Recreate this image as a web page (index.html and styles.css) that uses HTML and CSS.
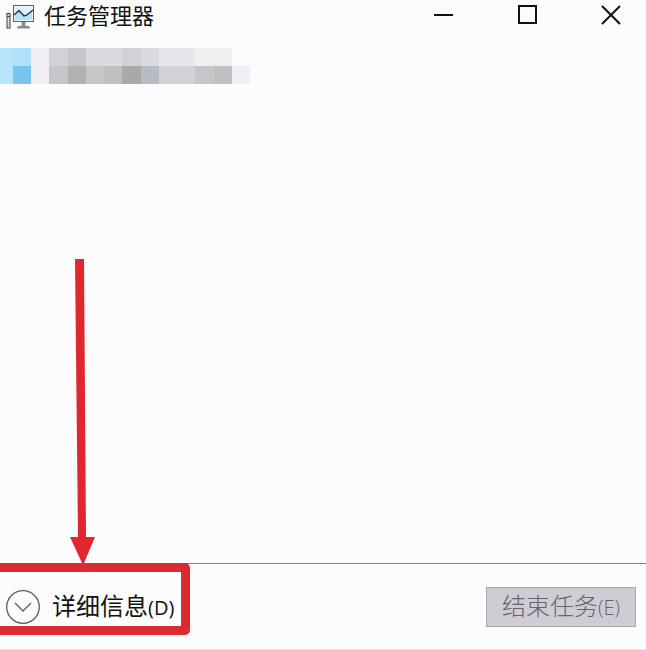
FILE: index.html
```html
<!DOCTYPE html>
<html lang="zh-CN">
<head>
  <meta charset="UTF-8">
  <title>任务管理器</title>
  <meta name="viewport" content="width=device-width, initial-scale=1.0">
  <link rel="stylesheet" href="styles.css">
</head>
<body>

  <div class="window">

    <!-- Title bar -->
    <header class="title-bar">
      <svg class="app-icon" width="30" height="30" viewBox="0 0 30 30" aria-hidden="true">
        <rect x="1" y="12.500" width="3" height="14.500" fill="#d9dde0" stroke="#3c4247"/>
        <path d="M1 15.500h3" stroke="#3c4247"/>
        <rect x="7.500" y="4.500" width="20" height="16" fill="#f4f8fa" stroke="#566067"/>
        <path d="M9 6h17v13H9z" fill="#b5e2f3"/>
        <path d="M9 14l4-4 5 5 3-1 5-5V6H9z" fill="#dcf2fb"/>
        <path d="M8 14l5-4.500L18 15l3-1 6-5" fill="none" stroke="#24323b" stroke-width="1.400"/>
        <path d="M15.500 21h4v4h-4z" fill="#8b9195"/>
        <path d="M12.500 25.500h10l1 1.500h-12z" fill="#c5c9cc" stroke="#565c61" stroke-width=".8"/>
      </svg>
      <h1>任务管理器</h1>
      <div class="window-buttons">
        <button type="button" aria-label="最小化">
          <svg width="22" height="22" viewBox="0 0 22 22"><path d="M2 11h19"/></svg>
        </button>
        <button type="button" aria-label="最大化">
          <svg width="22" height="22" viewBox="0 0 22 22"><path d="M3 2h17v17H3z"/></svg>
        </button>
        <button type="button" aria-label="关闭">
          <svg width="22" height="22" viewBox="0 0 22 22"><path d="M2 2l18 18M20 2L2 20"/></svg>
        </button>
      </div>
    </header>

    <!-- Running apps, name is masked -->
    <main class="app-list">
      <div class="mosaic">
        <i class="sky-1"></i><i class="sky-2"></i><i class="g1"></i><i class="g4"></i><i class="g5"></i><i class="g3"></i><i class="g3"></i><i class="g4"></i><i class="g3"></i><i class="g2"></i><i class="g2"></i><i class="g1"></i><i class="g1"></i><i></i>
        <i class="sky-1"></i><i class="sky-3"></i><i class="g1"></i><i class="g5"></i><i class="g7"></i><i class="g5"></i><i class="g6"></i><i class="g8"></i><i class="g6b"></i><i class="g4"></i><i class="g4"></i><i class="g5"></i><i class="g6"></i><i class="g0"></i>
      </div>
      <svg class="arrow" width="30" height="306" viewBox="0 0 30 306" aria-hidden="true">
        <path d="M6 0h9l2 278h9l-11 26h-2L1 278h8z"/>
      </svg>
    </main>

    <!-- Bottom bar -->
    <footer class="bottom-bar">
      <button type="button" class="details-btn">
        <svg width="34" height="34" viewBox="0 0 34 34" aria-hidden="true">
          <circle cx="17" cy="17" r="16.300"/>
          <path d="M9 13l8 8 8-8"/>
        </svg>
        <span>详细信息<small>(D)</small></span>
      </button>
      <button type="button" class="end-btn" disabled>结束任务<small>(E)</small></button>
      <div class="highlight"></div>
    </footer>

  </div>

</body>
</html>
```

FILE: styles.css
```css
* {
  box-sizing: border-box;
}

body {
  margin: 0;
  font-family: "Open Sans", "Noto Sans CJK SC", sans-serif;
  background: #fcfcfd;
  color: #111;
}

button {
  padding: 0;
  border: none;
  background: none;
  color: inherit;
  font-family: inherit;
}

.window {
  display: flex;
  flex-direction: column;
  min-height: 100vh;
  overflow: hidden;
  border-bottom: 1px solid #dfe5e8;
}

/* Title bar */
.title-bar {
  display: flex;
  align-items: center;
  height: 32px;
  padding-left: 6px;
}

.title-bar h1 {
  margin: 0 0 0 8px;
  font-size: 22px;
  font-weight: 400;
  line-height: 30px;
  align-self: flex-start;
}

.window-buttons {
  display: flex;
  gap: 2px;
  height: 32px;
  margin-left: auto;
  margin-right: -6px;
}

.window-buttons button {
  display: flex;
  align-items: center;
  justify-content: center;
  width: 82px;
  height: 30px;
}

.window-buttons svg {
  fill: none;
  stroke: #111;
  stroke-width: 2;
}

/* App list */
.app-list {
  position: relative;
  flex: 1;
  padding-top: 16px;
}

.mosaic {
  display: grid;
  grid-template-columns: 13px repeat(13, 1fr);
  grid-auto-rows: 18px;
  width: 250px;
}

.sky-1 { background: #b9e5fa; }
.sky-2 { background: #aee1fb; }
.sky-3 { background: #77c5ec; }
.g0 { background: #f0eff7; }
.g1 { background: #efeef1; }
.g2 { background: #e6e6ea; }
.g3 { background: #dcdade; }
.g4 { background: #d2d2d6; }
.g5 { background: #c6c6ca; }
.g6 { background: #bfbec0; }
.g6b { background: #b6bcc3; }
.g7 { background: #b1b1b4; }
.g8 { background: #a9a9a9; }

.arrow {
  position: absolute;
  left: 69px;
  bottom: -2px;
  z-index: 2;
  fill: #e0262e;
}

/* Bottom bar */
.bottom-bar {
  position: relative;
  display: flex;
  align-items: center;
  justify-content: space-between;
  height: 86px;
  padding: 0 10px 0 6px;
  border-top: 1px solid #8a7f84;
}

.bottom-bar button {
  font-size: 24px;
  line-height: 36px;
}

.bottom-bar small {
  font-size: 20px;
}

.details-btn {
  display: flex;
  align-items: center;
  gap: 12px;
}

.details-btn svg {
  fill: none;
  stroke: #5c5c60;
  stroke-width: 1.3;
}

.bottom-bar .end-btn {
  padding: 0 15px;
  border: 1px solid #aaa8ae;
  background: #cfcdd3;
  color: #666376;
  font-weight: 300;
}

.highlight {
  position: absolute;
  top: -1px;
  bottom: 14px;
  left: -10px;
  width: 200px;
  border: 9px solid #d92b30;
  border-radius: 5px;
  pointer-events: none;
}
```
